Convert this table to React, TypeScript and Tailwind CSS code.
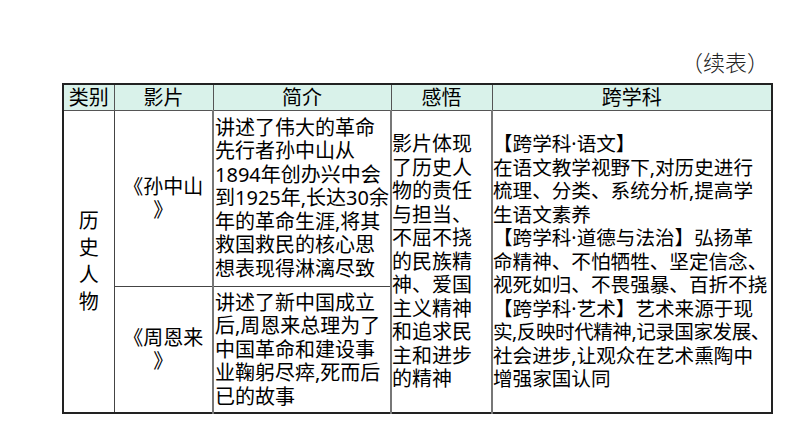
const FONT = "font-['Noto_Sans','Noto_Sans_CJK_SC',sans-serif]"

function Lines({ lines }: { lines: string[] }) {
  return (
    <>
      {lines.map((l, i) => (
        <div key={i} className={`whitespace-nowrap ${l.length > 15 ? 'tracking-[-0.5px]' : ''}`}>
          {l}
        </div>
      ))}
    </>
  )
}

const intro1 = [
  '讲述了伟大的革命',
  '先行者孙中山从',
  '1894年创办兴中会',
  '到1925年,长达30余',
  '年的革命生涯,将其',
  '救国救民的核心思',
  '想表现得淋漓尽致',
]

const intro2 = [
  '讲述了新中国成立',
  '后,周恩来总理为了',
  '中国革命和建设事',
  '业鞠躬尽瘁,死而后',
  '已的故事',
]

const insight = [
  '影片体现',
  '了历史人',
  '物的责任',
  '与担当、',
  '不屈不挠',
  '的民族精',
  '神、爱国',
  '主义精神',
  '和追求民',
  '主和进步',
  '的精神',
]

const cross = [
  '【跨学科·语文】',
  '在语文教学视野下,对历史进行',
  '梳理、分类、系统分析,提高学',
  '生语文素养',
  '【跨学科·道德与法治】弘扬革',
  '命精神、不怕牺牲、坚定信念、',
  '视死如归、不畏强暴、百折不挠',
  '【跨学科·艺术】艺术来源于现',
  '实,反映时代精神,记录国家发展、',
  '社会进步,让观众在艺术熏陶中',
  '增强家国认同',
]

export default function App() {
  return (
    <div className={`w-[794px] h-[447px] bg-white pl-[62px] pt-[46px] text-black ${FONT}`}>
      <div className="w-[709px]">
        <div className="h-[37px] text-right text-[22px] leading-[30px] text-[#222] pr-[2px] font-['Noto_Sans_CJK_SC',sans-serif] font-light">
          （续表）
        </div>
        <table className="w-[709px] table-fixed border-collapse border-2 border-[#222] text-[20px] leading-[23.5px]">
          <colgroup>
            <col className="w-[51px]" />
            <col className="w-[99px]" />
            <col className="w-[178px]" />
            <col className="w-[101px]" />
            <col className="w-[280px]" />
          </colgroup>
          <thead>
            <tr className="h-[26px] bg-[#d9f2ea] text-center">
              <th className="border border-[#555] font-normal p-0">类别</th>
              <th className="border border-[#555] font-normal p-0">影片</th>
              <th className="border border-[#555] font-normal p-0">简介</th>
              <th className="border border-[#555] font-normal p-0">感悟</th>
              <th className="border border-[#555] font-normal p-0">跨学科</th>
            </tr>
          </thead>
          <tbody>
            <tr className="h-[176px]">
              <td rowSpan={2} className="border border-[#444] p-0 text-center align-middle leading-[27px]">
                <Lines lines={['历', '史', '人', '物']} />
              </td>
              <td className="border border-[#444] p-0 text-center align-middle">
                <Lines lines={['《孙中山', '》']} />
              </td>
              <td className="border-x-2 border-y border-[#777] border-b-[#444] p-0 pl-[1px] align-middle">
                <Lines lines={intro1} />
              </td>
              <td rowSpan={2} className="border-x-2 border-[#777] p-0 align-middle">
                <Lines lines={insight} />
              </td>
              <td rowSpan={2} className="border border-[#444] p-0 align-middle text-[19.6px]">
                <Lines lines={cross} />
              </td>
            </tr>
            <tr className="h-[127px]">
              <td className="border border-[#444] p-0 text-center align-middle">
                <Lines lines={['《周恩来', '》']} />
              </td>
              <td className="border-x-2 border-y border-[#777] border-t-[#444] p-0 pl-[1px] align-middle">
                <Lines lines={intro2} />
              </td>
            </tr>
          </tbody>
        </table>
      </div>
    </div>
  )
}
